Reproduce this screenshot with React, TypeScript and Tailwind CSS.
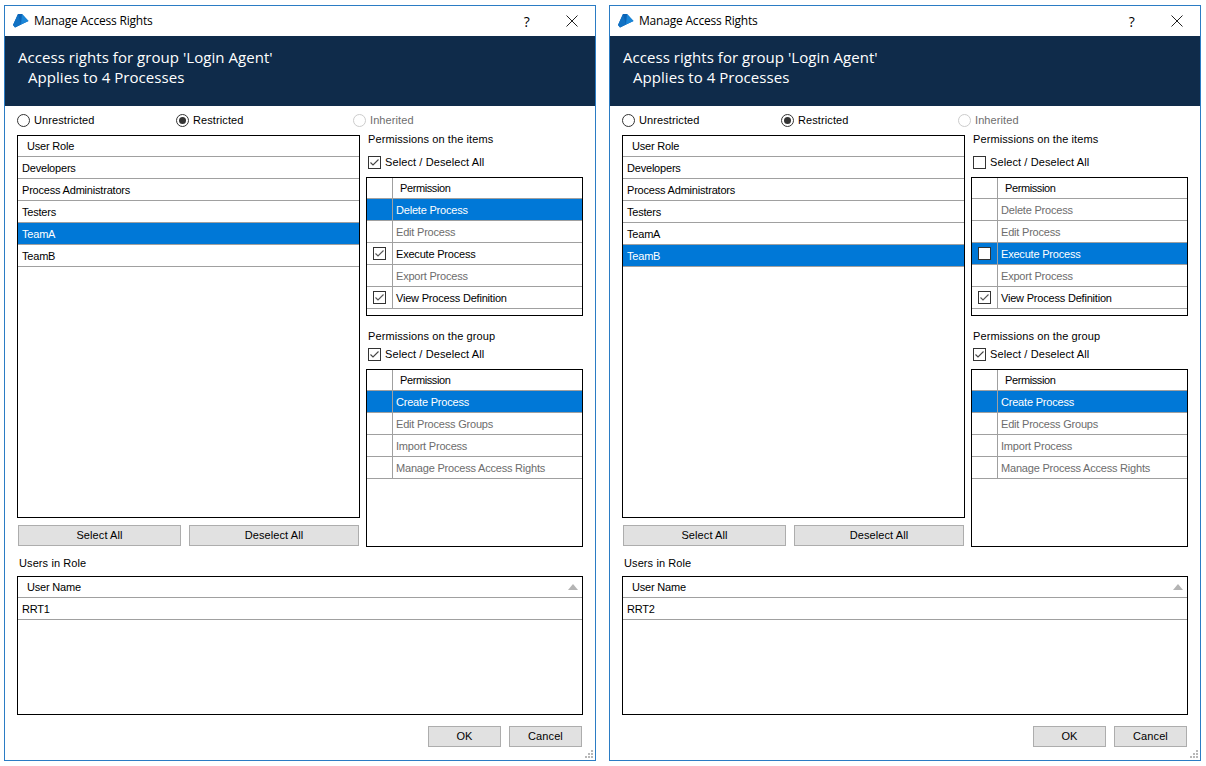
import React from "react";

const ui = "font-['Liberation_Sans',Arial,sans-serif] text-[11px] tracking-[0.1px] text-black";
const gridText = "tracking-[-0.2px]";

function Check({ on, cell }: { on: boolean; cell?: boolean }) {
  return (
    <span className="flex h-[13px] w-[13px] shrink-0 items-center justify-center border border-[#333] bg-white">
      {on && (
        <svg width="11" height="11" viewBox="0 0 11 11" fill="none">
          <path d="M1.5 5.5 L4 8 L9.5 2.5" stroke={cell ? "#555" : "#444"} strokeWidth="1.1" />
        </svg>
      )}
    </span>
  );
}

function Radio({ label, on, off, className }: { label: string; on?: boolean; off?: boolean; className: string }) {
  return (
    <div className={`flex items-center gap-1 ${className}`}>
      <span className={`flex h-[13px] w-[13px] items-center justify-center rounded-full border bg-white ${off ? "border-[#ccc]" : "border-[#333]"}`}>
        {on && <span className="h-[7px] w-[7px] rounded-full bg-[#333]" />}
      </span>
      <span className={off ? "text-[#6d6d6d]" : ""}>{label}</span>
    </div>
  );
}

function Btn({ label, className }: { label: string; className: string }) {
  return (
    <div className={`flex h-[21px] items-center justify-center border border-[#adadad] bg-[#e1e1e1] ${className}`}>{label}</div>
  );
}

function ListGrid({ header, rows, selected, className, sort }: { header: string; rows: string[]; selected?: number; className: string; sort?: boolean }) {
  return (
    <div className={`border border-black bg-white ${gridText} ${className}`}>
      <div className="flex h-[21px] items-center justify-between border-b border-[#a0a0a0] pl-[9px] pr-[4px]">
        <span className="pt-[1px]">{header}</span>
        {sort && (
          <svg width="10" height="6" viewBox="0 0 10 6"><path d="M5 0 L10 6 L0 6 Z" fill="#b4b4b4" /></svg>
        )}
      </div>
      {rows.map((r, i) => (
        <div key={r} className={`flex h-[22px] items-center border-b border-[#a0a0a0] pl-[4px] pt-[1px] ${i === selected ? "bg-[#0078d7] text-white" : ""}`}>
          {r}
        </div>
      ))}
    </div>
  );
}

type PermRow = { label: string; enabled: boolean; checked?: boolean; selected?: boolean };

function PermGrid({ rows, className }: { rows: PermRow[]; className: string }) {
  return (
    <div className={`border border-black bg-white ${gridText} ${className}`}>
      <div className="flex h-[21px] border-b border-[#a0a0a0]">
        <div className="w-[26px] border-r border-[#a0a0a0]" />
        <div className="flex items-center pl-[7px] pt-[1px] tracking-[-0.4px]">Permission</div>
      </div>
      {rows.map((r) => (
        <div key={r.label} className={`flex h-[22px] border-b border-[#a0a0a0] ${r.selected ? "bg-[#0078d7] text-white" : r.enabled ? "" : "text-[#6d6d6d]"}`}>
          <div className="flex w-[26px] items-center justify-center border-r border-[#a0a0a0]">
            {r.enabled && <Check on={!!r.checked} cell />}
          </div>
          <div className="flex items-center pl-[3px] pt-[1px]">{r.label}</div>
        </div>
      ))}
    </div>
  );
}

function Dialog({ roleSel, user, allItems, items }: { roleSel: number; user: string; allItems: boolean; items: PermRow[] }) {
  const groupRows: PermRow[] = [
    { label: "Create Process", enabled: false, selected: true },
    { label: "Edit Process Groups", enabled: false },
    { label: "Import Process", enabled: false },
    { label: "Manage Process Access Rights", enabled: false },
  ];
  return (
    <div className={`relative flex h-[756px] w-[592px] flex-col border border-[#2b7cc4] bg-white ${ui}`}>
      <div className="flex h-[30px] items-center pl-[8px] pr-[17px]">
        <svg width="16" height="14" viewBox="0 0 16 14" className="mr-[5px]">
          <path d="M5 0 L9 0 L15.5 7 L2 13.5 L0 11 Z" fill="#0b63b5" />
          <path d="M9 0 L15.5 7 L8 10.5 Z" fill="#1a86d8" />
          <path d="M5 0 L8 10.5 L2 13.5 L0 11 Z" fill="#1272c4" />
        </svg>
        <span className="font-['Open_Sans',sans-serif] text-[12px] tracking-[-0.2px]">Manage Access Rights</span>
        <span className="ml-auto mr-[36px] font-['Open_Sans',sans-serif] text-[14px]">?</span>
        <svg width="12" height="12" viewBox="0 0 12 12"><path d="M0.5 0.5 L11.5 11.5 M11.5 0.5 L0.5 11.5" stroke="#222" strokeWidth="1" /></svg>
      </div>
      <div className="h-[70px] bg-[#0f2b4a] pl-[13px] pt-[11px] font-['Open_Sans',sans-serif] text-[15px] leading-[20px] tracking-[0.05px] text-white">
        <div>Access rights for group 'Login Agent'</div>
        <div className="pl-[10px]">Applies to 4 Processes</div>
      </div>
      <div className="flex h-[29px] items-center pl-[12px]">
        <Radio label="Unrestricted" className="w-[159px]" on={false} />
        <Radio label="Restricted" className="w-[177px]" on />
        <Radio label="Inherited" className="" off />
      </div>
      <div className="flex pl-[12px]">
        <div className="w-[343px]">
          <ListGrid
            className="h-[383px]"
            header="User Role"
            rows={["Developers", "Process Administrators", "Testers", "TeamA", "TeamB"]}
            selected={roleSel}
          />
          <div className="mt-[7px] flex gap-[8px] pl-[1px]">
            <Btn label="Select All" className="w-[163px]" />
            <Btn label="Deselect All" className="w-[170px]" />
          </div>
        </div>
        <div className="ml-[6px] mt-[-3px] w-[217px]">
          <div className="h-[14px] pl-[2px] leading-[14px]">Permissions on the items</div>
          <div className="mt-[10px] flex h-[13px] items-center gap-[4px] pl-[2px]">
            <Check on={allItems} />
            <span>Select / Deselect All</span>
          </div>
          <PermGrid className="mt-[8px] h-[139px]" rows={items} />
          <div className="mt-[13px] h-[14px] pl-[2px] leading-[14px]">Permissions on the group</div>
          <div className="mt-[5px] flex h-[13px] items-center gap-[4px] pl-[2px]">
            <Check on />
            <span>Select / Deselect All</span>
          </div>
          <PermGrid className="mt-[8px] h-[178px]" rows={groupRows} />
        </div>
      </div>
      <div className="mt-[9px] h-[14px] pl-[14px] leading-[14px]">Users in Role</div>
      <div className="pl-[12px]">
        <ListGrid className="mt-[6px] h-[139px] w-[566px]" header="User Name" rows={[user]} sort />
      </div>
      <div className="mt-[11px] flex justify-end gap-[8px] pr-[13px]">
        <Btn label="OK" className="w-[73px]" />
        <Btn label="Cancel" className="w-[73px]" />
      </div>
      <svg width="10" height="10" viewBox="0 0 10 10" className="absolute bottom-[1px] right-[1px]">
        <g fill="#b8b8b8">
          <rect x="7" y="1" width="2" height="2" />
          <rect x="4" y="4" width="2" height="2" />
          <rect x="7" y="4" width="2" height="2" />
          <rect x="1" y="7" width="2" height="2" />
          <rect x="4" y="7" width="2" height="2" />
          <rect x="7" y="7" width="2" height="2" />
        </g>
      </svg>
    </div>
  );
}

export default function App() {
  return (
    <div className="flex h-[766px] w-[1206px] gap-[13px] bg-white pl-[4px] pt-[5px]">
      <Dialog
        roleSel={3}
        user="RRT1"
        allItems
        items={[
          { label: "Delete Process", enabled: false, selected: true },
          { label: "Edit Process", enabled: false },
          { label: "Execute Process", enabled: true, checked: true },
          { label: "Export Process", enabled: false },
          { label: "View Process Definition", enabled: true, checked: true },
        ]}
      />
      <Dialog
        roleSel={4}
        user="RRT2"
        allItems={false}
        items={[
          { label: "Delete Process", enabled: false },
          { label: "Edit Process", enabled: false },
          { label: "Execute Process", enabled: true, checked: false, selected: true },
          { label: "Export Process", enabled: false },
          { label: "View Process Definition", enabled: true, checked: true },
        ]}
      />
    </div>
  );
}
